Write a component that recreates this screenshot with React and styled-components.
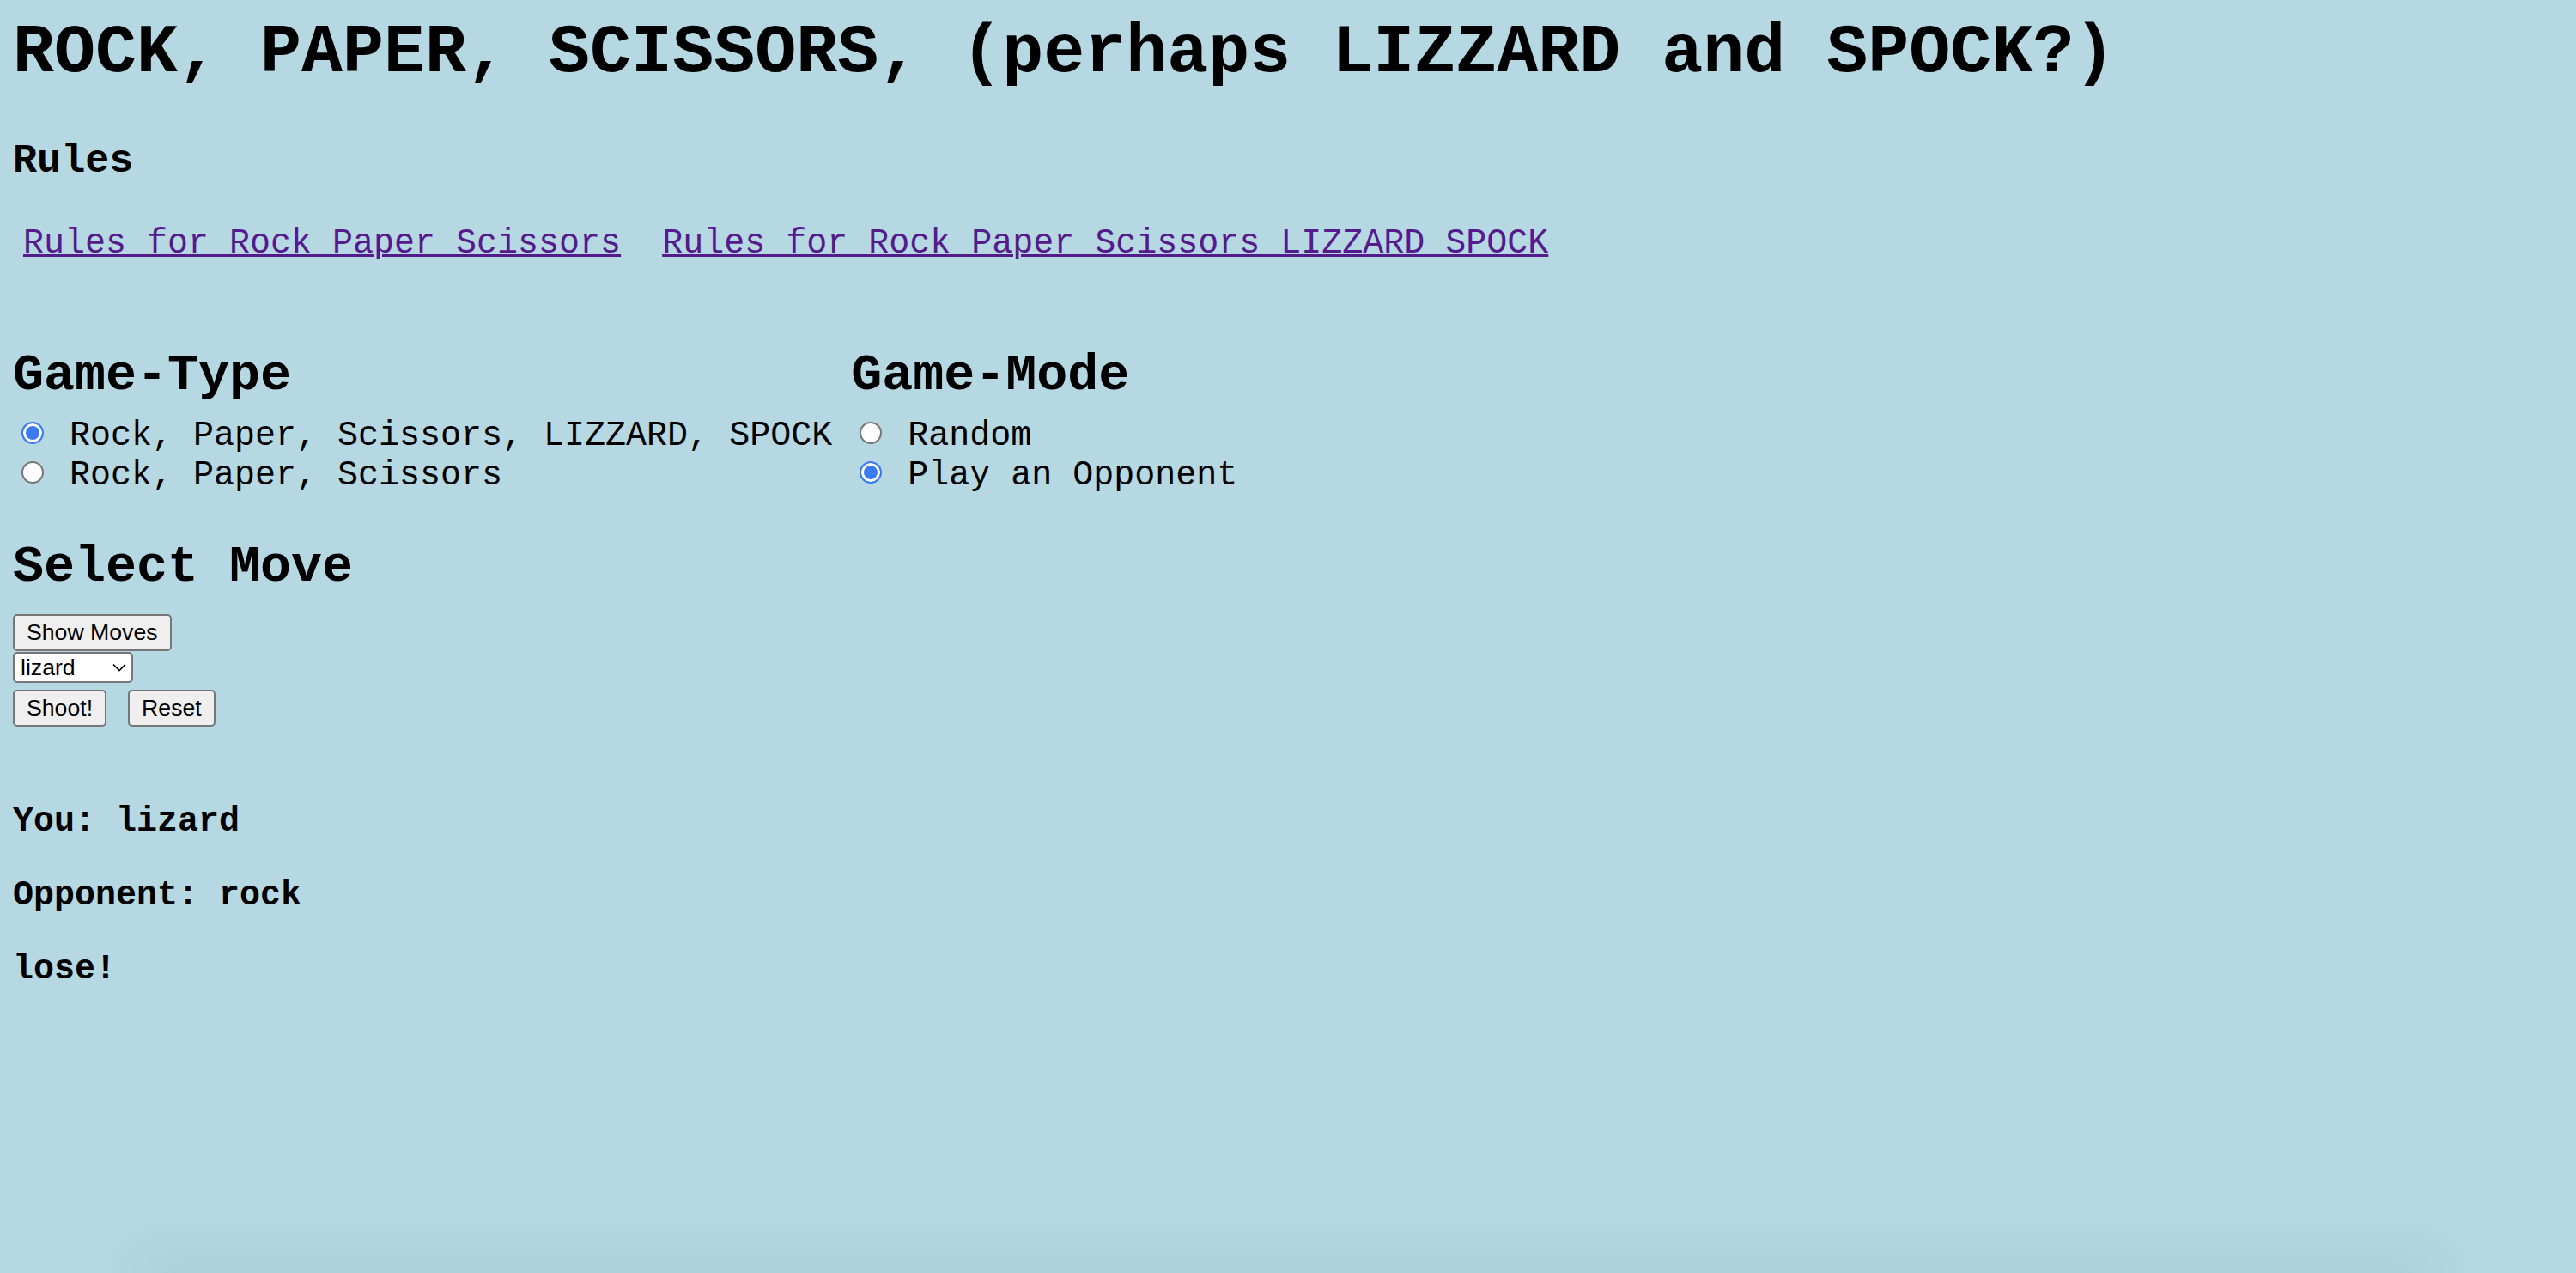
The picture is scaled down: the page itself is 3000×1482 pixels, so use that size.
import React, { useState } from "react";
import styled, { createGlobalStyle } from "styled-components";

const GlobalStyle = createGlobalStyle`
html, body {
    margin:0;
    padding:0;
    background-color:#b5d8e3;
}
body{
    font-family:"Liberation Mono","Courier New",monospace;
    font-size:40px;
    color:#000;
}
`;

const Page = styled.div`
box-sizing:border-box;
min-height:100vh;
display:flex;
flex-direction:column;
align-items:stretch;
padding:16px 15px 0;
`;

const Title = styled.h1`
margin:0;
font-size:80px;
font-weight:bold;
line-height:normal;
white-space:nowrap;
`;

const RulesTitle = styled.h3`
margin:54px 0 46.8px;
font-size:46.8px;
font-weight:bold;
line-height:normal;
`;

const LinkRow = styled.p`
display:flex;
gap:48px;
margin:0;
padding-left:12px;
font-size:40px;
line-height:normal;
a{
    color:#551a8b;
    text-decoration:underline;
    text-decoration-thickness:3px;
    text-underline-offset:2px;
    white-space:nowrap;
}
`;

const Columns = styled.div`
display:flex;
align-items:flex-start;
gap:22px;
margin-top:97px;
`;

const Column = styled.div`
display:flex;
flex-direction:column;
`;

const SectionTitle = styled.h2`
margin:${(p) => p.$above || 0}px 0 ${(p) => p.$below || 0}px;
font-size:60px;
font-weight:bold;
line-height:normal;
`;

const Option = styled.label`
display:block;
font-size:40px;
line-height:46px;
white-space:pre;
cursor:pointer;
`;

const Radio = styled.input.attrs({ type: "radio" })`
appearance:none;
box-sizing:border-box;
width:26px;
height:26px;
margin:0 6px 1px 10px;
border:2px solid #767676;
border-radius:50%;
background:#fff;
vertical-align:baseline;
cursor:pointer;
&:checked{
    border-color:#3b7bf2;
    background:#3b7bf2;
    box-shadow:inset 0 0 0 3px #fff;
}
`;

const Controls = styled.div`
display:flex;
flex-direction:column;
align-items:flex-start;
`;

const Button = styled.button`
box-sizing:border-box;
padding:4px 14px;
border:2px solid #767676;
border-radius:5px;
background:#efefef;
color:#000;
font-family:"Liberation Sans",Arial,sans-serif;
font-size:26.67px;
line-height:normal;
cursor:pointer;
`;

const SelectBox = styled.label`
box-sizing:border-box;
display:flex;
align-items:center;
justify-content:space-between;
width:140px;
height:36px;
margin-top:1.4px;
padding:0 6px 0 7px;
border:2px solid #767676;
border-radius:5px;
background:#fff;
select{
    appearance:none;
    flex:1;
    min-width:0;
    padding:0;
    border:none;
    outline:none;
    background:transparent;
    color:#000;
    font-family:"Liberation Sans",Arial,sans-serif;
    font-size:26.67px;
    line-height:normal;
    cursor:pointer;
}
`;

const ButtonRow = styled.div`
display:flex;
gap:25px;
margin-top:7.4px;
`;

const Results = styled.div`
margin-top:47px;
p{
    margin:41px 0;
    font-size:40px;
    font-weight:bold;
    line-height:normal;
}
`;

const Shade = styled.div`
height:0;
margin:auto 160px 0;
box-shadow:0 0 60px 16px rgba(40,85,105,0.12);
`;

const moves = ["rock", "paper", "scissors", "lizard", "spock"];

export default function App() {
    const [type, setType] = useState("rpsls");
    const [mode, setMode] = useState("opponent");
    const [move, setMove] = useState("lizard");
    const [showMoves, setShowMoves] = useState(true);
    const [result, setResult] = useState({ you: "lizard", opp: "rock", out: "lose!" });

    const list = type === "rpsls" ? moves : moves.slice(0, 3);

    const reset = () => {
        setResult(null);
        setMove(list[0]);
    };

    return (
        <Page>
            <GlobalStyle />
            <Title>ROCK, PAPER, SCISSORS, (perhaps LIZZARD and SPOCK?)</Title>
            <RulesTitle>Rules</RulesTitle>
            <LinkRow>
                <a href="#rps">Rules for Rock Paper Scissors</a>
                <a href="#rpsls">Rules for Rock Paper Scissors LIZZARD SPOCK</a>
            </LinkRow>

            <Columns>
                <Column>
                    <SectionTitle $below={14}>Game-Type</SectionTitle>
                    <Option>
                        <Radio name="type" checked={type === "rpsls"} onChange={() => setType("rpsls")} /> Rock, Paper, Scissors, LIZZARD, SPOCK
                    </Option>
                    <Option>
                        <Radio name="type" checked={type === "rps"} onChange={() => setType("rps")} /> Rock, Paper, Scissors
                    </Option>
                </Column>
                <Column>
                    <SectionTitle $below={14}>Game-Mode</SectionTitle>
                    <Option>
                        <Radio name="mode" checked={mode === "random"} onChange={() => setMode("random")} /> Random
                    </Option>
                    <Option>
                        <Radio name="mode" checked={mode === "opponent"} onChange={() => setMode("opponent")} /> Play an Opponent
                    </Option>
                </Column>
            </Columns>

            <SectionTitle $above={49} $below={21}>Select Move</SectionTitle>
            <Controls>
                <Button onClick={() => setShowMoves(!showMoves)}>Show Moves</Button>
                {showMoves && (
                    <SelectBox>
                        <select value={move} onChange={(e) => setMove(e.target.value)}>
                            {list.map((m) => (
                                <option key={m} value={m}>{m}</option>
                            ))}
                        </select>
                        <svg width="16" height="10" viewBox="0 0 16 10">
                            <polyline points="1,1.5 8,8.5 15,1.5" fill="none" stroke="#000" strokeWidth="1.6" />
                        </svg>
                    </SelectBox>
                )}
                <ButtonRow>
                    <Button>Shoot!</Button>
                    <Button onClick={reset}>Reset</Button>
                </ButtonRow>
            </Controls>

            {result && (
                <Results>
                    <p>You: {result.you}</p>
                    <p>Opponent: {result.opp}</p>
                    <p>{result.out}</p>
                </Results>
            )}
            <Shade />
        </Page>
    );
}
